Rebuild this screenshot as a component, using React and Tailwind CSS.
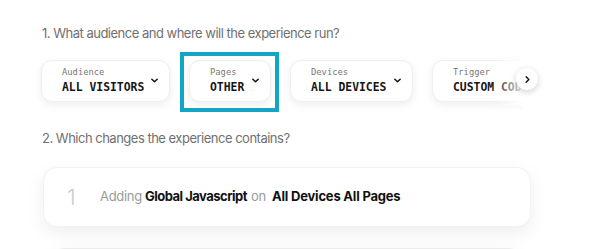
import React from "react";

const filters = [
    { label: "Audience", value: "ALL VISITORS", width: "w-[129px]" },
    { label: "Pages", value: "OTHER", width: "w-[82px]", active: true },
    { label: "Devices", value: "ALL DEVICES", width: "w-[123px]" },
    { label: "Trigger", value: "CUSTOM CODE", width: "w-[130px]", noChevron: true },
];

function Chevron({ dir = "down" }) {
    return (
        <svg width="9" height="9" viewBox="0 0 10 10" fill="none" stroke="#111" strokeWidth="1.6" strokeLinecap="round" strokeLinejoin="round">
            {dir === "down" ? <path d="M2 3.5 L5 6.5 L8 3.5" /> : <path d="M3.5 2 L6.5 5 L3.5 8" />}
        </svg>
    );
}

function FilterCard({ label, value, width, active, noChevron }) {
    return (
        <div className={`relative shrink-0 ${width}`}>
            {active && (
                <div className="absolute -left-[9px] -right-[8px] -top-[8px] -bottom-[10px] border-4 border-[#12a5c6]" />
            )}
            <div className="flex items-center justify-between pl-5 pr-2.5 h-[42px] bg-white rounded-[11px] border border-[#efefef] shadow-[0_3px_8px_rgba(0,0,0,0.07)]">
                <div className="flex flex-col font-['DejaVu_Sans_Mono',monospace]">
                    <span className="text-[8.8px] leading-[13px] text-[#777]">{label}</span>
                    <span className="text-[11.4px] leading-[17px] font-bold text-[#151515] whitespace-nowrap">{value}</span>
                </div>
                {!noChevron && (
                    <div className="-mt-[1px]">
                        <Chevron />
                    </div>
                )}
            </div>
        </div>
    );
}

export default function App() {
    return (
        <div className="w-[591px] h-[249px] bg-white overflow-hidden font-['Inter',sans-serif]">
            <div className="pl-[42px] pt-[25px]">
                <p className="text-[13px] leading-[16px] tracking-[-0.5px] text-[#707070]">
                    1. What audience and where will the experience run?
                </p>

                {/* scroller: padding keeps the highlight box and shadows from being clipped */}
                <div className="relative mt-[9px] -ml-[1px] w-[497px]">
                    <div className="flex gap-[19px] overflow-hidden pt-[10px] pb-3 -mb-3 pl-[6px] -ml-[6px] w-[488px]">
                        {filters.map((f) => (
                            <FilterCard key={f.label} {...f} />
                        ))}
                    </div>
                    <div className="absolute top-[10px] left-[452px] w-[32px] h-[46px] bg-gradient-to-r from-white/0 to-white" />
                    <button className="absolute left-[475px] top-[18px] w-[22px] h-[22px] rounded-full bg-white flex items-center justify-center shadow-[0_2px_6px_rgba(0,0,0,0.18)]">
                        <Chevron dir="right" />
                    </button>
                </div>

                <p className="mt-[28px] text-[13px] leading-[16px] tracking-[-0.5px] text-[#707070]">
                    2. Which changes the experience contains?
                </p>

                <div className="mt-[21px] ml-[1px] w-[488px] h-[60px] bg-white rounded-[14px] border border-[#f2f2f2] shadow-[0_6px_18px_rgba(0,0,0,0.07)] flex items-center pl-[23px]">
                    <span className="text-[22px] font-light text-[#c3ced8] w-[33px]">1</span>
                    <span className="text-[13px] tracking-[-0.3px] text-[#9a9a9a]">Adding</span>
                    <span className="ml-[3px] text-[13px] font-bold tracking-[-0.5px] text-[#111]">Global Javascript</span>
                    <span className="ml-[4px] text-[13px] tracking-[-0.3px] text-[#9a9a9a]">on</span>
                    <span className="ml-[6px] text-[13px] font-bold tracking-[-0.2px] text-[#111]">All Devices All Pages</span>
                </div>

                <div className="mt-[21px] ml-[8px] w-[473px] h-[40px] bg-white rounded-[14px] border border-[#ececec] shadow-[0_6px_18px_rgba(0,0,0,0.07)]" />
            </div>
        </div>
    );
}
